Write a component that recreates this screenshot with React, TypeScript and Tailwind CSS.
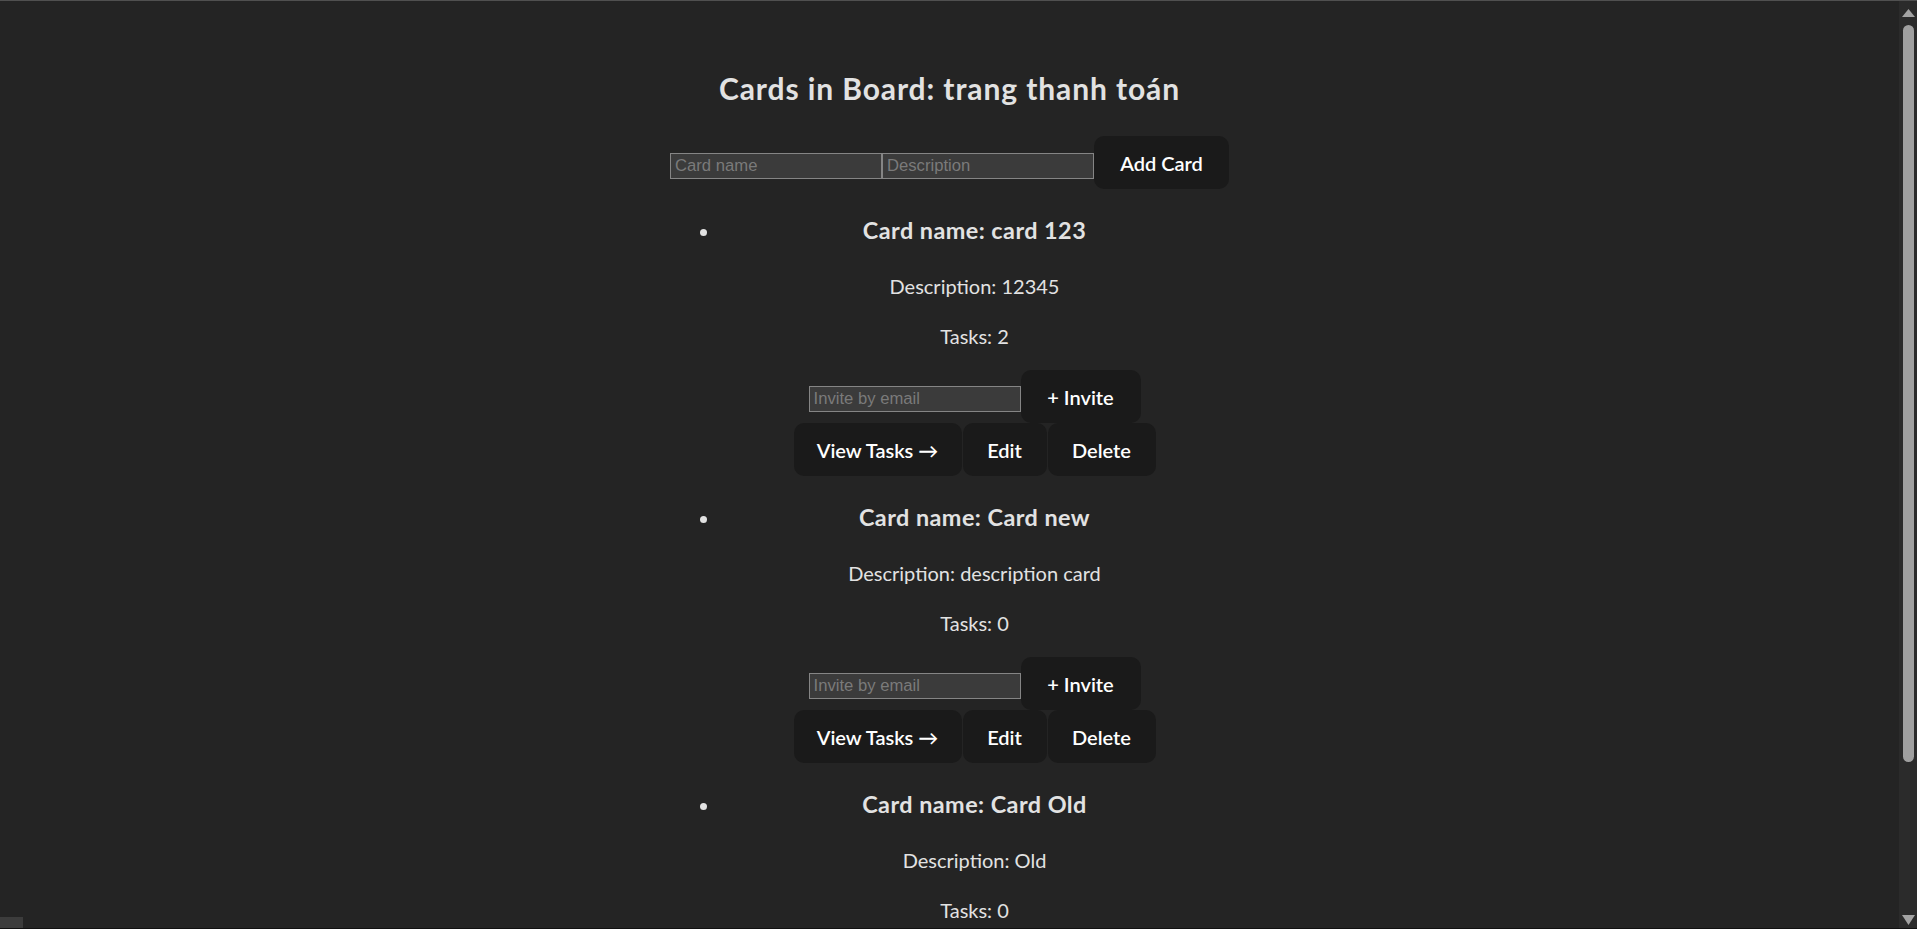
import React from 'react';

type Card = {
	id: number;
	name: string;
	description: string;
	tasks: number;
};

const cards: Card[] = [
	{ id: 1, name: 'card 123', description: '12345', tasks: 2 },
	{ id: 2, name: 'Card new', description: 'description card', tasks: 0 },
	{ id: 3, name: 'Card Old', description: 'Old', tasks: 0 },
];

const btn = "h-[53px] shrink-0 rounded-[10px] bg-[#1a1a1a] text-white text-[20px] font-semibold flex items-center justify-center";
const input = "h-[26px] shrink-0 border border-[#858585] bg-[#3b3b3b] pl-[4px] text-[16.67px] text-[#e2e2e2] placeholder:text-[#7a7a7a] outline-none";

function CardItem({ card }: { card: Card }) {
	return (
		<li className="list-disc marker:text-[#e2e2e2]">
			<h3 className="mt-[24px] text-[23.4px] leading-[35px] font-bold tracking-[0.45px]">
				Card name: {card.name}
			</h3>
			<p className="mt-[23px] leading-[30px]">Description: {card.description}</p>
			<p className="mt-[20px] leading-[30px]">Tasks: {card.tasks}</p>
			<div className="mt-[19px] flex items-start justify-center">
				<input
					className={input + " w-[212px] mt-[16px]"}
					style={{ fontFamily: '"Liberation Sans", Arial, sans-serif' }}
					placeholder="Invite by email"
				/>
				<button className={btn + " w-[120px]"}>+ Invite</button>
			</div>
			<div className="flex justify-center gap-[1px]">
				<button className={btn + " w-[168px]"}>View Tasks →</button>
				<button className={btn + " w-[84px]"}>Edit</button>
				<button className={btn + " w-[108px]"}>Delete</button>
			</div>
		</li>
	);
}

function Scrollbar() {
	return (
		<div className="w-[18px] shrink-0 bg-[#2b2b2b] flex flex-col items-center">
			<svg width="13" height="8" viewBox="0 0 13 8" className="mt-[8px] shrink-0">
				<polygon points="6.5,0 13,8 0,8" fill="#a3a3a3" />
			</svg>
			<div className="mt-[8px] ml-[1px] h-[737px] w-[11px] rounded-full bg-[#a0a0a0]" />
			<div className="flex-1" />
			<svg width="13" height="10" viewBox="0 0 13 10" className="mb-[3px] shrink-0">
				<polygon points="0,0 13,0 6.5,10" fill="#a3a3a3" />
			</svg>
		</div>
	);
}

export default function App() {
	return (
		<div
			className="h-[929px] w-full overflow-hidden bg-[#242424] flex flex-col text-[#e2e2e2] text-[20px]"
			style={{ fontFamily: 'Lato, "Noto Sans", sans-serif' }}
		>
			<div className="h-px shrink-0 bg-[#505050]" />
			<div className="flex flex-1 min-h-0">
				<main className="relative flex-1 overflow-hidden text-center">
					<div className="mx-auto w-[559px] pt-[65px]">
						<h2 className="text-[30px] leading-[45px] font-bold tracking-[0.9px]">
							Cards in Board: trang thanh toán
						</h2>
						<div className="mt-[25px] flex items-start">
							<input
								className={input + " w-[212px] mt-[17px]"}
								style={{ fontFamily: '"Liberation Sans", Arial, sans-serif' }}
								placeholder="Card name"
							/>
							<input
								className={input + " w-[212px] mt-[17px]"}
								style={{ fontFamily: '"Liberation Sans", Arial, sans-serif' }}
								placeholder="Description"
							/>
							<button className={btn + " w-[135px]"}>Add Card</button>
						</div>
						<ul className="pl-[50px]">
							{cards.map(card => (
								<CardItem key={card.id} card={card} />
							))}
						</ul>
					</div>
					<div className="absolute bottom-0 left-0 h-[11px] w-[23px] bg-[#3c3c3c]" />
				</main>
				<Scrollbar />
			</div>
			<div className="h-px shrink-0 bg-[#111111]" />
		</div>
	);
}
